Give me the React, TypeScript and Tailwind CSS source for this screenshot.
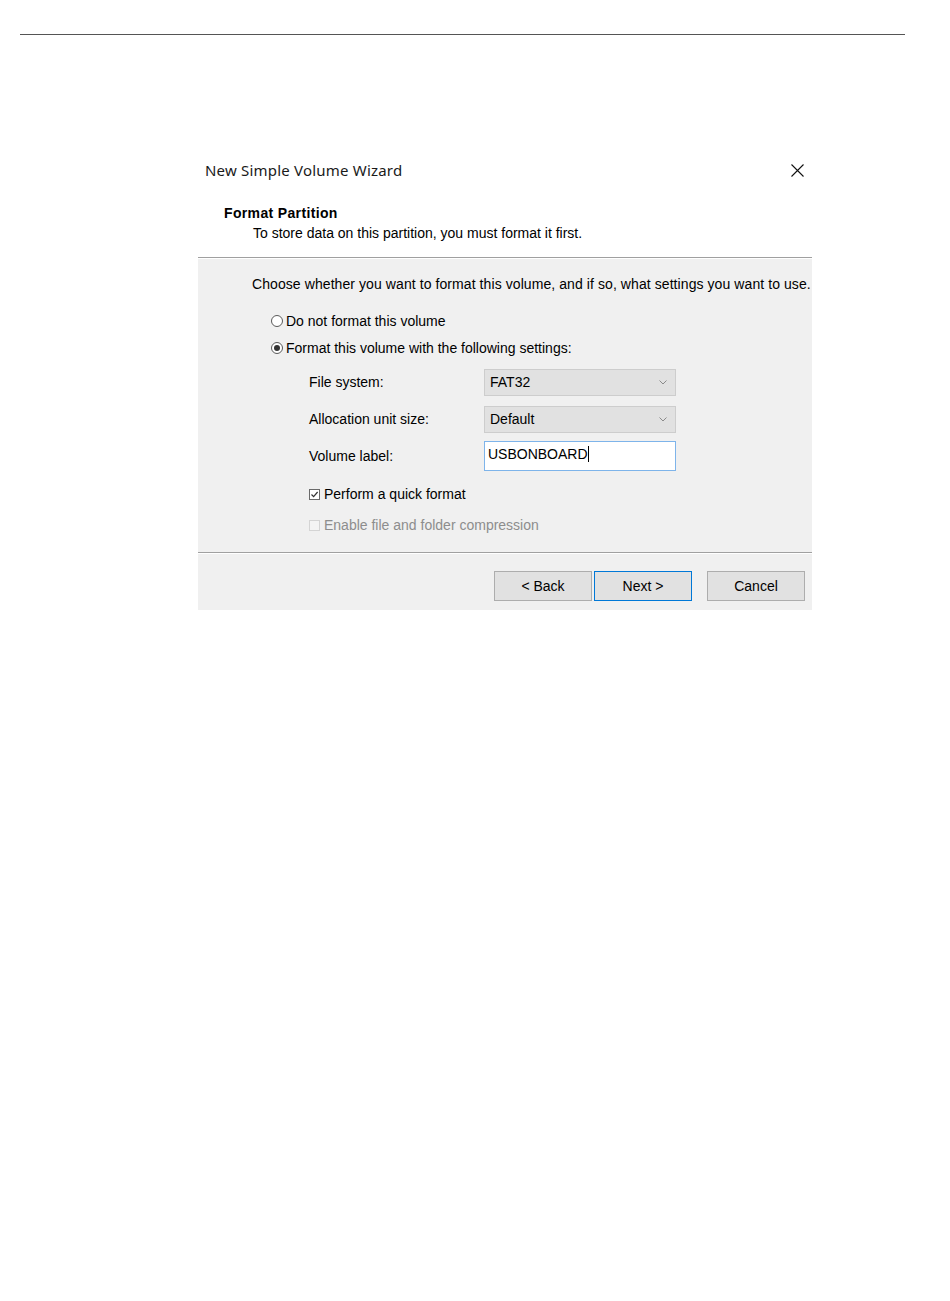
import React from 'react';

const sans = { fontFamily: '"Liberation Sans", Arial, sans-serif' };

function Radio({ checked }: { checked?: boolean }) {
  return (
    <span className="w-[12px] h-[12px] rounded-full border border-[#5a5a5a] bg-white flex items-center justify-center mr-[3px]">
      {checked && <span className="w-[6px] h-[6px] rounded-full bg-[#333333]" />}
    </span>
  );
}

function Check({ checked, disabled }: { checked?: boolean; disabled?: boolean }) {
  return (
    <span
      className={
        disabled
          ? 'w-[11px] h-[11px] border border-[#d4d4d4] bg-[#f4f4f4] mr-[4px]'
          : 'w-[11px] h-[11px] border border-[#6a6a6a] bg-white flex items-center justify-center mr-[4px]'
      }
    >
      {checked && (
        <svg width="9" height="9" viewBox="0 0 9 9">
          <path d="M1.5 4.5 L3.6 6.6 L7.6 2" fill="none" stroke="#333" strokeWidth="1.2" />
        </svg>
      )}
    </span>
  );
}

function Select({ value }: { value: string }) {
  return (
    <div className="w-[192px] h-[27px] bg-[#e1e1e1] border border-[#cdcdcd] flex items-center justify-between pl-[5px] pr-[8px] text-[14px] text-black">
      <span>{value}</span>
      <svg width="8" height="5" viewBox="0 0 8 5">
        <path d="M0.5 0.5 L4 4 L7.5 0.5" fill="none" stroke="#8a8a8a" strokeWidth="1" />
      </svg>
    </div>
  );
}

function Btn({ label, primary }: { label: string; primary?: boolean }) {
  return (
    <div
      className={
        primary
          ? 'w-[98px] h-[30px] bg-[#e1e1e1] border border-[#0078d7] flex items-center justify-center text-[14px] text-black'
          : 'w-[98px] h-[30px] bg-[#e1e1e1] border border-[#adadad] flex items-center justify-center text-[14px] text-black'
      }
    >
      {label}
    </div>
  );
}

export default function App() {
  return (
    <div className="w-[950px] h-[1301px] bg-white pt-[34px]" style={sans}>
      <div className="ml-[20px] w-[885px] h-px bg-[#555555]" />

      <div className="ml-[198px] w-[614px] mt-[115px]">
        {/* title bar */}
        <div className="h-[40px] flex items-center justify-between pl-[7px] pr-[8px]">
          <span className="text-[15px] text-[#1a1a1a] tracking-[0.2px]" style={{ fontFamily: '"Noto Sans", sans-serif' }}>
            New Simple Volume Wizard
          </span>
          <svg width="13" height="13" viewBox="0 0 13 13">
            <path d="M0.5 0.5 L12.5 12.5 M12.5 0.5 L0.5 12.5" stroke="#111" strokeWidth="1.1" />
          </svg>
        </div>

        {/* header */}
        <div className="pt-[13px] pb-[14px] pl-[26px] border-b border-[#a0a0a0]">
          <div className="h-[20px] leading-[20px] text-[14px] font-bold text-black tracking-[0.35px]">Format Partition</div>
          <div className="h-[20px] leading-[20px] text-[14px] text-black pl-[29px]">
            To store data on this partition, you must format it first.
          </div>
        </div>
        <div className="h-px bg-white" />

        {/* body */}
        <div className="bg-[#f0f0f0] pt-[15px] pb-[17px] text-[14px] text-black">
          <div className="h-[20px] leading-[20px] pl-[54px] whitespace-nowrap tracking-[0.08px]">
            Choose whether you want to format this volume, and if so, what settings you want to use.
          </div>

          <div className="mt-[17px] h-[20px] pl-[73px] flex items-center">
            <Radio />
            <span>Do not format this volume</span>
          </div>
          <div className="mt-[7px] h-[20px] pl-[73px] flex items-center">
            <Radio checked />
            <span>Format this volume with the following settings:</span>
          </div>

          <div className="mt-[11px] pl-[111px] flex flex-col gap-[10px]">
            <div className="flex items-center">
              <span className="w-[175px]">File system:</span>
              <Select value="FAT32" />
            </div>
            <div className="flex items-center">
              <span className="w-[175px]">Allocation unit size:</span>
              <Select value="Default" />
            </div>
            <div className="flex items-center -mt-[2px]">
              <span className="w-[175px]">Volume label:</span>
              <div className="w-[192px] h-[30px] bg-white border border-[#7eb4ea] flex items-center pl-[3px] pb-[4px]">
                <span>USBONBOARD</span>
                <span className="w-px h-[16px] bg-black" />
              </div>
            </div>
          </div>

          <div className="mt-[13px] h-[20px] pl-[111px] flex items-center">
            <Check checked />
            <span>Perform a quick format</span>
          </div>
          <div className="mt-[11px] h-[20px] pl-[111px] flex items-center">
            <Check disabled />
            <span className="text-[#8d8d8d]">Enable file and folder compression</span>
          </div>
        </div>
        <div className="h-px bg-[#a0a0a0]" />
        <div className="h-px bg-white" />

        {/* footer */}
        <div className="bg-[#f0f0f0] pt-[17px] pb-[9px] flex justify-end pr-[7px]">
          <Btn label="< Back" />
          <div className="w-[2px]" />
          <Btn label="Next >" primary />
          <div className="w-[15px]" />
          <Btn label="Cancel" />
        </div>
      </div>
    </div>
  );
}
